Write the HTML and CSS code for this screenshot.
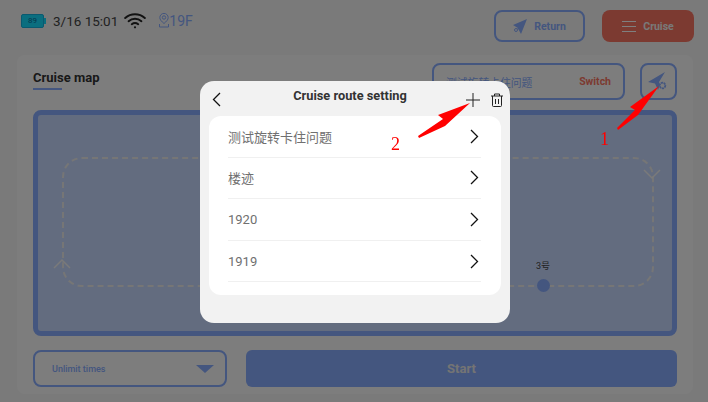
FILE: index.html
```html
<!DOCTYPE html>
<html lang="en">
<head>
  <meta charset="UTF-8" />
  <meta name="viewport" content="width=device-width, initial-scale=1" />
  <title>Cruise route setting</title>
  <link rel="stylesheet" href="styles.css">
</head>
<body>
  <header class="topbar">
    <div class="status">
      <div class="battery"><span>89</span></div>
      <span class="clock">3/16 15:01</span>
      <svg class="wifi" width="22" height="17" viewBox="0 0 22 17" fill="none" stroke="#222" stroke-width="2" stroke-linecap="round">
        <path d="M1.2 6C6.8 1 15.2 1 20.8 6" />
        <path d="M4.6 9.2C8.2 6 13.800 6 17.400 9.2" />
        <path d="M7.800 12.200C9.600 10.800 12.400 10.800 14.200 12.200" />
        <circle cx="11" cy="15.300" r="1.100" fill="#222" stroke="none" />
      </svg>
      <svg class="pin" width="10" height="15" viewBox="0 0 10 15" fill="none" stroke="#88acfe" stroke-width="1">
        <path d="M5 10.500C2.500 8.400 .8 6.600 .8 4.600a4.200 4.200 0 0 1 8.400 0c0 2-1.700 3.800-4.200 5.900z" />
        <circle cx="5" cy="4.500" r="1.700" />
        <path d="M.5 11v3h9v-3" />
      </svg>
      <span class="floor">19F</span>
    </div>
    <div class="actions">
      <button class="btn btn-return">
        <svg width="14" height="15" viewBox="0 0 14 15"><path d="M14 0L0 6l4 2.500L5 8l-1 1 1.500 1.500L8 15z" fill="#88acfe" /><circle cx="3" cy="11" r="1.500" fill="none" stroke="#88acfe" /></svg>
        Return
      </button>
      <button class="btn btn-cruise">
        <span class="burger"><i></i><i></i><i></i></span>
        Cruise
      </button>
    </div>
  </header>

  <main class="card">
    <div class="card-head">
      <h2 class="card-title">Cruise map</h2>
      <div class="route-box">
        <span class="route-name">测试旋转卡住问题</span>
        <span class="route-switch">Switch</span>
      </div>
      <button class="gear-btn">
        <svg width="21" height="20" viewBox="0 0 21 20">
          <path d="M17 0L0 10l7 1.500L10 18l2-5-1-3 6-10z" fill="#88acfe" />
          <circle cx="14.500" cy="13.500" r="2.800" fill="none" stroke="#88acfe" stroke-width="1.800" stroke-dasharray="2.200 .6" />
        </svg>
      </button>
    </div>

    <div class="map">
      <div class="track"></div>
      <svg class="chevron chevron-up" width="18" height="11" viewBox="0 0 18 11" fill="none" stroke="#f4f4f4" stroke-width="1.500"><path d="M1 10l8-8 8 8" /></svg>
      <svg class="chevron chevron-down" width="18" height="11" viewBox="0 0 18 11" fill="none" stroke="#f4f4f4" stroke-width="1.500"><path d="M1 1l8 8 8-8" /></svg>
      <div class="node">
        <span class="node-label">3号</span>
        <span class="node-dot"></span>
      </div>
    </div>

    <div class="controls">
      <div class="times">
        <span>Unlimit times</span>
        <span class="caret"></span>
      </div>
      <button class="start">Start</button>
    </div>
  </main>

  <div class="overlay"></div>

  <section class="modal">
    <div class="modal-head">
      <svg class="back" width="9" height="15" viewBox="0 0 9 15" fill="none" stroke="#111" stroke-width="1.300"><path d="M8 1L1.500 7.500 8 14" /></svg>
      <h3 class="modal-title">Cruise route setting</h3>
      <svg class="add" width="14" height="14" viewBox="0 0 14 14" stroke="#222" stroke-width="1"><path d="M7 0v14M0 7h14" /></svg>
      <svg class="trash" width="12" height="14" viewBox="0 0 12 14" fill="none" stroke="#222" stroke-width="1">
        <path d="M0 3h12M3.500 3V1h5v2M1.500 3v9.500a1 1 0 0 0 1 1h7a1 1 0 0 0 1-1V3M4.500 6v5M7.500 6v5" />
      </svg>
    </div>
    <ul class="route-list">
      <li class="route-row">测试旋转卡住问题<svg width="9" height="15" viewBox="0 0 9 15" fill="none" stroke="#111" stroke-width="1.300"><path d="M1 1l6.500 6.500L1 14" /></svg></li>
      <li class="route-row">楼迹<svg width="9" height="15" viewBox="0 0 9 15" fill="none" stroke="#111" stroke-width="1.300"><path d="M1 1l6.500 6.500L1 14" /></svg></li>
      <li class="route-row">1920<svg width="9" height="15" viewBox="0 0 9 15" fill="none" stroke="#111" stroke-width="1.300"><path d="M1 1l6.500 6.500L1 14" /></svg></li>
      <li class="route-row">1919<svg width="9" height="15" viewBox="0 0 9 15" fill="none" stroke="#111" stroke-width="1.300"><path d="M1 1l6.500 6.500L1 14" /></svg></li>
    </ul>
  </section>

  <!-- red notes drawn over the screenshot -->
  <svg class="notes" width="708" height="402" viewBox="0 0 708 402">
    <polygon points="659,86 630,107 635,110 617,128 618,130 638,115" fill="#f00" />
    <polygon points="470,103 438,115 443,119 418,136 419,138 445,126" fill="#f00" />
    <text x="600" y="145" class="note-num">1</text>
    <text x="391" y="150" class="note-num">2</text>
  </svg>
</body>
</html>
```

FILE: styles.css
```css
* {
  margin: 0;
  padding: 0;
  box-sizing: border-box;
}
html, body {
  width: 708px;
  height: 402px;
  overflow: hidden;
}
body {
  font-family: Roboto, "Noto Sans CJK SC", sans-serif;
  background-color: #f5f5f5;
  color: #333;
  padding: 10px 15px 8px 17px;
  display: flex;
  flex-direction: column;
  gap: 13px;
}
.topbar {
  display: flex;
  justify-content: space-between;
  align-items: flex-start;
  height: 32px;
  padding-left: 4px;
}
.status {
  display: flex;
  align-items: center;
  height: 21px;
}
.battery {
  width: 23px;
  height: 14px;
  background-color: #17dcff;
  border: 1px solid #15b4e0;
  border-radius: 2px;
  font-size: 8px;
  line-height: 12px;
  text-align: center;
  color: #0a6f9a;
  position: relative;
}
.battery::after {
  content: "";
  position: absolute;
  right: -3px;
  top: 3px;
  width: 2px;
  height: 6px;
  background-color: #17dcff;
}
.clock {
  font-size: 13.500px;
  color: #444;
  margin-left: 9px;
}
.wifi {
  margin-left: 6px;
}
.pin {
  margin-left: 13px;
}
.floor {
  font-size: 14px;
  color: #88acfe;
}
.actions {
  display: flex;
  gap: 17px;
  margin-right: -1px;
}
.btn {
  width: 92px;
  height: 32px;
  border-radius: 8px;
  font-family: inherit;
  font-size: 10.500px;
  font-weight: 700;
  display: flex;
  align-items: center;
  justify-content: center;
  gap: 7px;
}
.btn-return {
  width: 91px;
  background: transparent;
  border: 2px solid #88acfe;
  color: #88acfe;
}
.btn-cruise {
  background-color: #f87462;
  border: none;
  color: #f3f3f3;
}
.burger {
  display: flex;
  flex-direction: column;
  gap: 4px;
  width: 14px;
}
.burger i {
  display: block;
  height: 1px;
  background-color: #fff;
}
.card {
  flex: 1;
  background-color: #fbfbfb;
  border-radius: 8px;
  padding: 8px 16px 7px;
  display: flex;
  flex-direction: column;
}
.card-head {
  display: flex;
  align-items: flex-start;
  height: 37px;
}
.card-title {
  font-size: 13px;
  font-weight: 700;
  color: #333;
  line-height: 15px;
  padding: 7px 0 3px;
  position: relative;
  margin-right: auto;
}
.card-title::after {
  content: "";
  position: absolute;
  left: 0;
  bottom: -2px;
  width: 29px;
  height: 2px;
  background-color: #88acfe;
}
.route-box {
  width: 193px;
  height: 37px;
  border: 2px solid #88acfe;
  border-radius: 8px;
  padding: 0 12px;
  display: flex;
  align-items: center;
  justify-content: space-between;
}
.route-name {
  font-size: 10.800px;
  color: #88acfe;
}
.route-switch {
  font-size: 10.500px;
  font-weight: 700;
  color: #f87462;
}
.gear-btn {
  width: 37px;
  height: 37px;
  margin-left: 15px;
  border: 2px solid #88acfe;
  border-radius: 8px;
  background: transparent;
  display: flex;
  align-items: center;
  justify-content: center;
}
.map {
  margin-top: 10px;
  height: 226px;
  background-color: #c6d8ff;
  border: 5px solid #88acfe;
  border-radius: 8px;
  position: relative;
}
.track {
  position: absolute;
  left: 24px;
  top: 42px;
  width: 592px;
  height: 130px;
  border: 2px dashed #ececec;
  border-radius: 20px;
}
.chevron {
  position: absolute;
}
.chevron-up {
  left: 15px;
  top: 143px;
}
.chevron-down {
  left: 605px;
  top: 54px;
}
.node {
  position: absolute;
  left: 495px;
  top: 145px;
  width: 20px;
  display: flex;
  flex-direction: column;
  align-items: center;
  gap: 7px;
}
.node-label {
  font-size: 9px;
  line-height: 12px;
  color: #444;
}
.node-dot {
  width: 13px;
  height: 13px;
  border-radius: 50%;
  background-color: #88acfe;
}
.controls {
  margin-top: 14px;
  display: flex;
  gap: 19px;
}
.times {
  width: 194px;
  height: 37px;
  border: 2px solid #88acfe;
  border-radius: 8px;
  padding: 0 11px 0 17px;
  display: flex;
  align-items: center;
  justify-content: space-between;
  font-size: 9px;
  font-weight: 500;
  color: #88acfe;
}
.caret {
  width: 0;
  height: 0;
  border-left: 9px solid transparent;
  border-right: 9px solid transparent;
  border-top: 8px solid #88acfe;
}
.start {
  flex: 1;
  height: 37px;
  border: none;
  border-radius: 6px;
  background-color: #88acfe;
  color: #e8e8e8;
  font-family: inherit;
  font-size: 13px;
  font-weight: 700;
}
.overlay {
  position: fixed;
  inset: 0;
  background-color: rgba(0, 0, 0, 0.5);
}
.modal {
  position: fixed;
  left: 200px;
  top: 81px;
  width: 310px;
  height: 242px;
  background-color: #f2f2f2;
  border-radius: 14px;
  padding: 0 9px;
}
.modal-head {
  height: 35px;
  display: flex;
  align-items: center;
  position: relative;
}
.modal-title {
  position: absolute;
  left: 0;
  right: 10px;
  top: 7px;
  text-align: center;
  font-size: 12.800px;
  line-height: 16px;
  font-weight: 700;
  color: #333;
}
.back {
  margin-left: 3px;
  margin-top: 2px;
}
.add {
  margin-left: auto;
  margin-top: 2px;
}
.trash {
  margin-left: 11px;
  margin-right: -2px;
  margin-top: 2px;
}
.route-list {
  list-style: none;
  background-color: #fff;
  border-radius: 12px;
  height: 179px;
  padding: 0 20px 0 19px;
}
.route-row {
  height: 41.600px;
  border-bottom: 1px solid #f0f0f0;
  display: flex;
  align-items: center;
  justify-content: space-between;
  font-size: 13px;
  color: #707070;
}
.route-row svg {
  margin-right: 2px;
}
.notes {
  position: fixed;
  left: 0;
  top: 0;
}
.note-num {
  font-family: "Liberation Serif", serif;
  font-size: 18px;
  fill: #f00;
}
```
